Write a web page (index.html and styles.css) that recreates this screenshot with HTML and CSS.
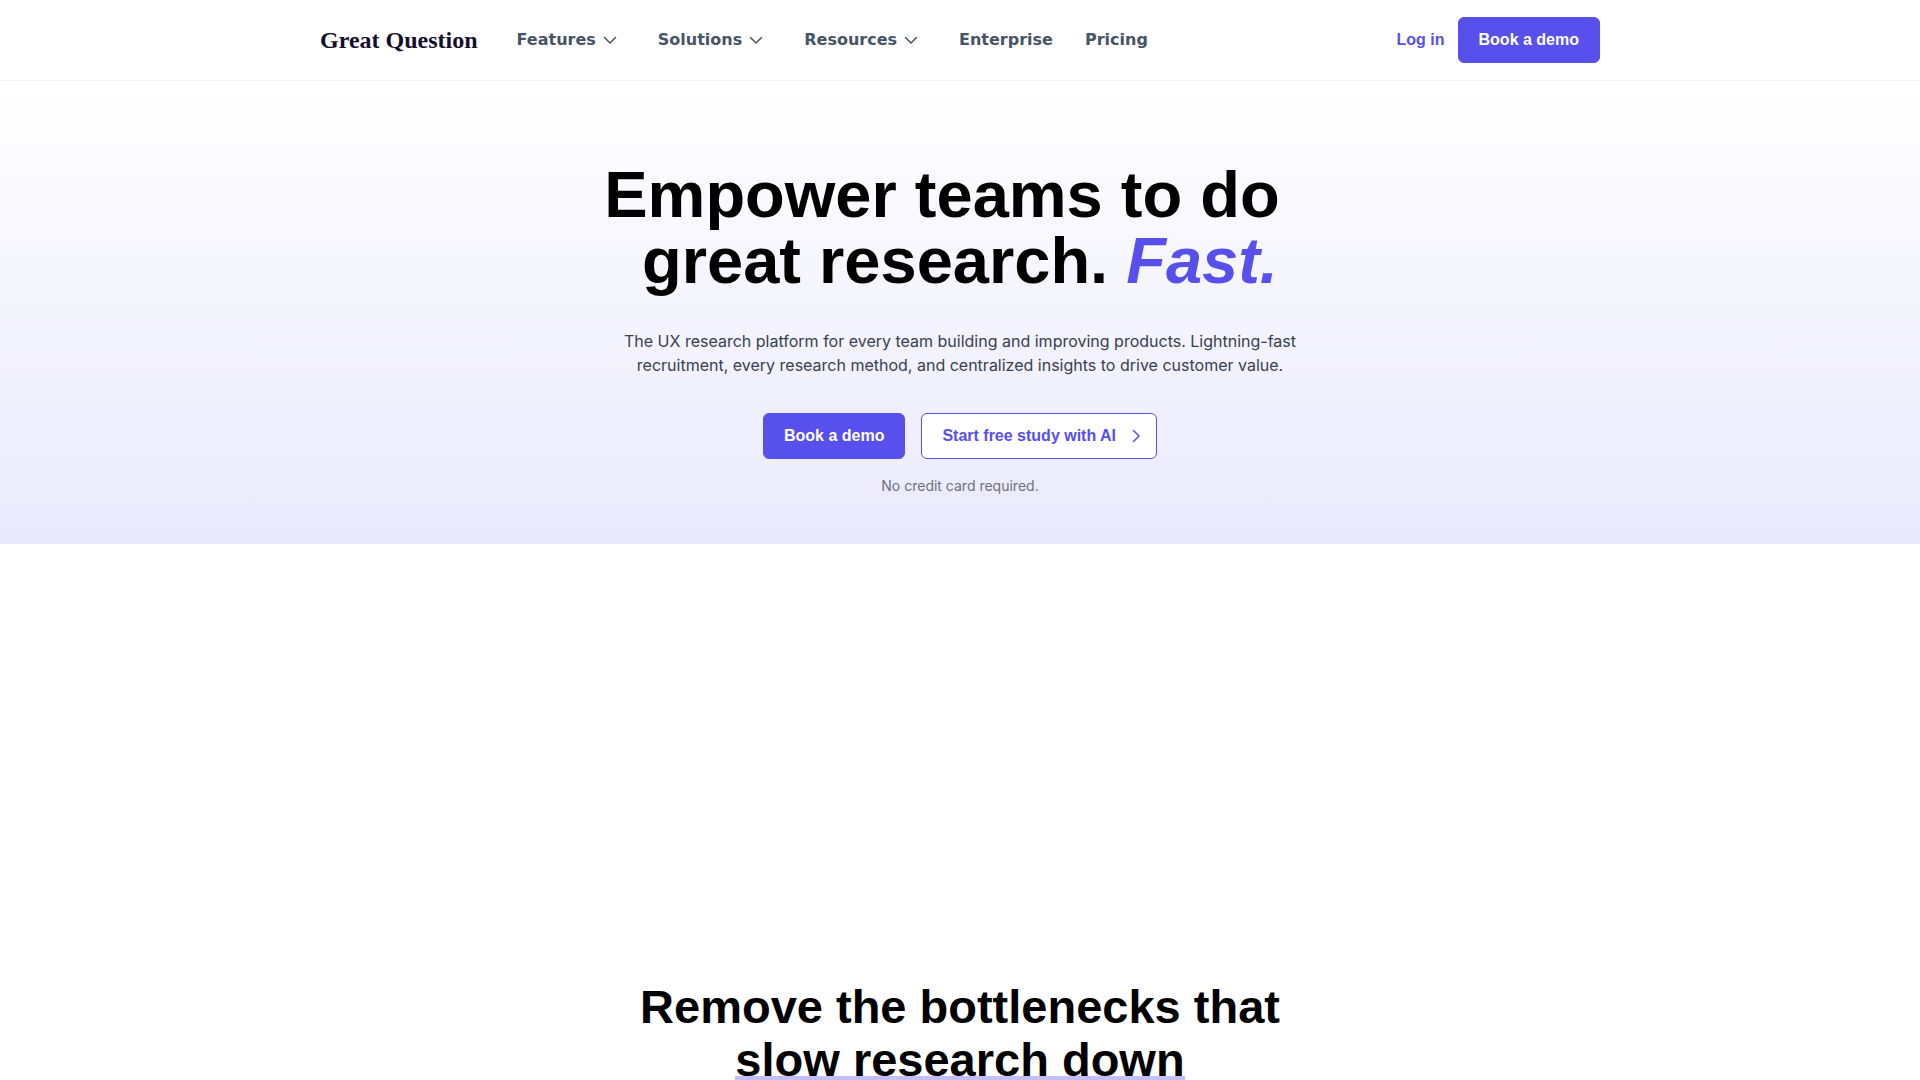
FILE: index.html
```html
<!DOCTYPE html>
<html lang="en">
<head>
    <meta charset="UTF-8">
    <meta name="viewport" content="width=device-width, initial-scale=1.0">
    <title>Great Question</title>
    <link rel="stylesheet" href="styles.css">
</head>
<body>
    <header class="header">
        <div class="container header-inner">
            <a href="#" class="logo">Great Question</a>
            <nav class="nav">
                <button type="button" class="nav-item nav-toggle">
                    Features
                    <svg class="chevron" viewBox="0 0 24 24" aria-hidden="true"><path d="M6.5 9.5l5.5 5.5 5.5-5.5"/></svg>
                </button>
                <button type="button" class="nav-item nav-toggle">
                    Solutions
                    <svg class="chevron" viewBox="0 0 24 24" aria-hidden="true"><path d="M6.5 9.5l5.5 5.5 5.5-5.5"/></svg>
                </button>
                <button type="button" class="nav-item nav-toggle">
                    Resources
                    <svg class="chevron" viewBox="0 0 24 24" aria-hidden="true"><path d="M6.5 9.5l5.5 5.5 5.5-5.5"/></svg>
                </button>
                <a href="#" class="nav-item">Enterprise</a>
                <a href="#" class="nav-item">Pricing</a>
            </nav>
            <div class="header-actions">
                <a href="#" class="login">Log in</a>
                <a href="#" class="btn btn-primary">Book a demo</a>
            </div>
        </div>
    </header>

    <main>
        <section class="hero">
            <h1>Empower teams to do&nbsp;&nbsp;<br>great research. <em>Fast.</em></h1>
            <p class="hero-text">The UX research platform for every team building and improving products. Lightning-fast recruitment, every research method, and centralized insights to drive customer value.</p>
            <div class="hero-actions">
                <a href="#" class="btn btn-primary">Book a demo</a>
                <a href="#" class="btn btn-outline">
                    Start free study with AI
                    <svg class="chevron" viewBox="0 0 24 24" aria-hidden="true"><path d="M9.5 6.5l5.5 5.5-5.5 5.5"/></svg>
                </a>
            </div>
            <p class="hero-note">No credit card required.</p>
        </section>

        <section class="bottlenecks">
            <h2>Remove the bottlenecks that<br><span class="underline">slow research down</span></h2>
        </section>
    </main>
</body>
</html>
```

FILE: styles.css
```css
* {
    margin: 0;
    padding: 0;
    box-sizing: border-box;
}

body {
    background: #fff;
    color: #000;
    font-family: Inter, sans-serif;
    font-size: 16px;
    line-height: 24px;
}

a {
    color: inherit;
    text-decoration: none;
}

.container {
    max-width: 1280px;
    margin: 0 auto;
}

/* header */
.header {
    background: #fff;
    border-bottom: 1px solid #f1f0fb;
}

.header-inner {
    display: flex;
    align-items: center;
    min-height: 80px;
}

.logo {
    margin-right: 39px;
    color: #120f2d;
    font-family: "Liberation Serif", serif;
    font-size: 24px;
    font-weight: bold;
    white-space: nowrap;
}

.nav {
    display: flex;
    align-items: center;
    gap: 32px;
}

.nav-item {
    color: #475467;
    font-family: "DejaVu Sans", sans-serif;
    font-size: 16px;
    font-weight: bold;
    line-height: 24px;
}

.nav-toggle {
    display: flex;
    align-items: center;
    gap: 2px;
    padding-right: 4px;
    border: 0;
    background: none;
    cursor: pointer;
}

.chevron {
    width: 24px;
    height: 24px;
    fill: none;
    stroke: currentColor;
    stroke-width: 1.5;
    stroke-linecap: round;
    stroke-linejoin: round;
}

.header-actions {
    display: flex;
    align-items: center;
    gap: 13px;
    margin-left: auto;
}

.login {
    color: #5850ec;
    font-family: "Liberation Sans", sans-serif;
    font-weight: bold;
}

/* buttons */
.btn {
    display: flex;
    align-items: center;
    padding: 10px 20px;
    border: 1px solid #5850ec;
    border-radius: 6px;
    font-family: "Liberation Sans", sans-serif;
    font-weight: bold;
    white-space: nowrap;
}

.btn-primary {
    background: #5850ec;
    color: #fff;
}

.btn-outline {
    gap: 8px;
    padding-right: 8px;
    background: #fff;
    color: #5850ec;
}

/* hero */
.hero {
    display: flex;
    flex-direction: column;
    align-items: center;
    padding: 81px 24px 48px;
    background: linear-gradient(#fff, #eae9fc);
    text-align: center;
}

h1 {
    font-family: "Liberation Sans", sans-serif;
    font-size: 65px;
    line-height: 66px;
}

h1 em {
    color: #5850ec;
}

.hero-text {
    max-width: 700px;
    margin-top: 35px;
    color: #374151;
}

.hero-actions {
    display: flex;
    gap: 16px;
    margin-top: 36px;
}

.hero-note {
    margin-top: 16px;
    color: #6b7280;
    font-size: 14px;
    line-height: 21px;
}

/* bottlenecks */
.bottlenecks {
    padding: 436px 24px 96px;
    text-align: center;
}

h2 {
    font-family: "Liberation Sans", sans-serif;
    font-size: 47px;
    line-height: 53px;
}

.underline {
    background: linear-gradient(#c3bffa, #c3bffa) 0 100% / 100% 10px no-repeat;
}
```
